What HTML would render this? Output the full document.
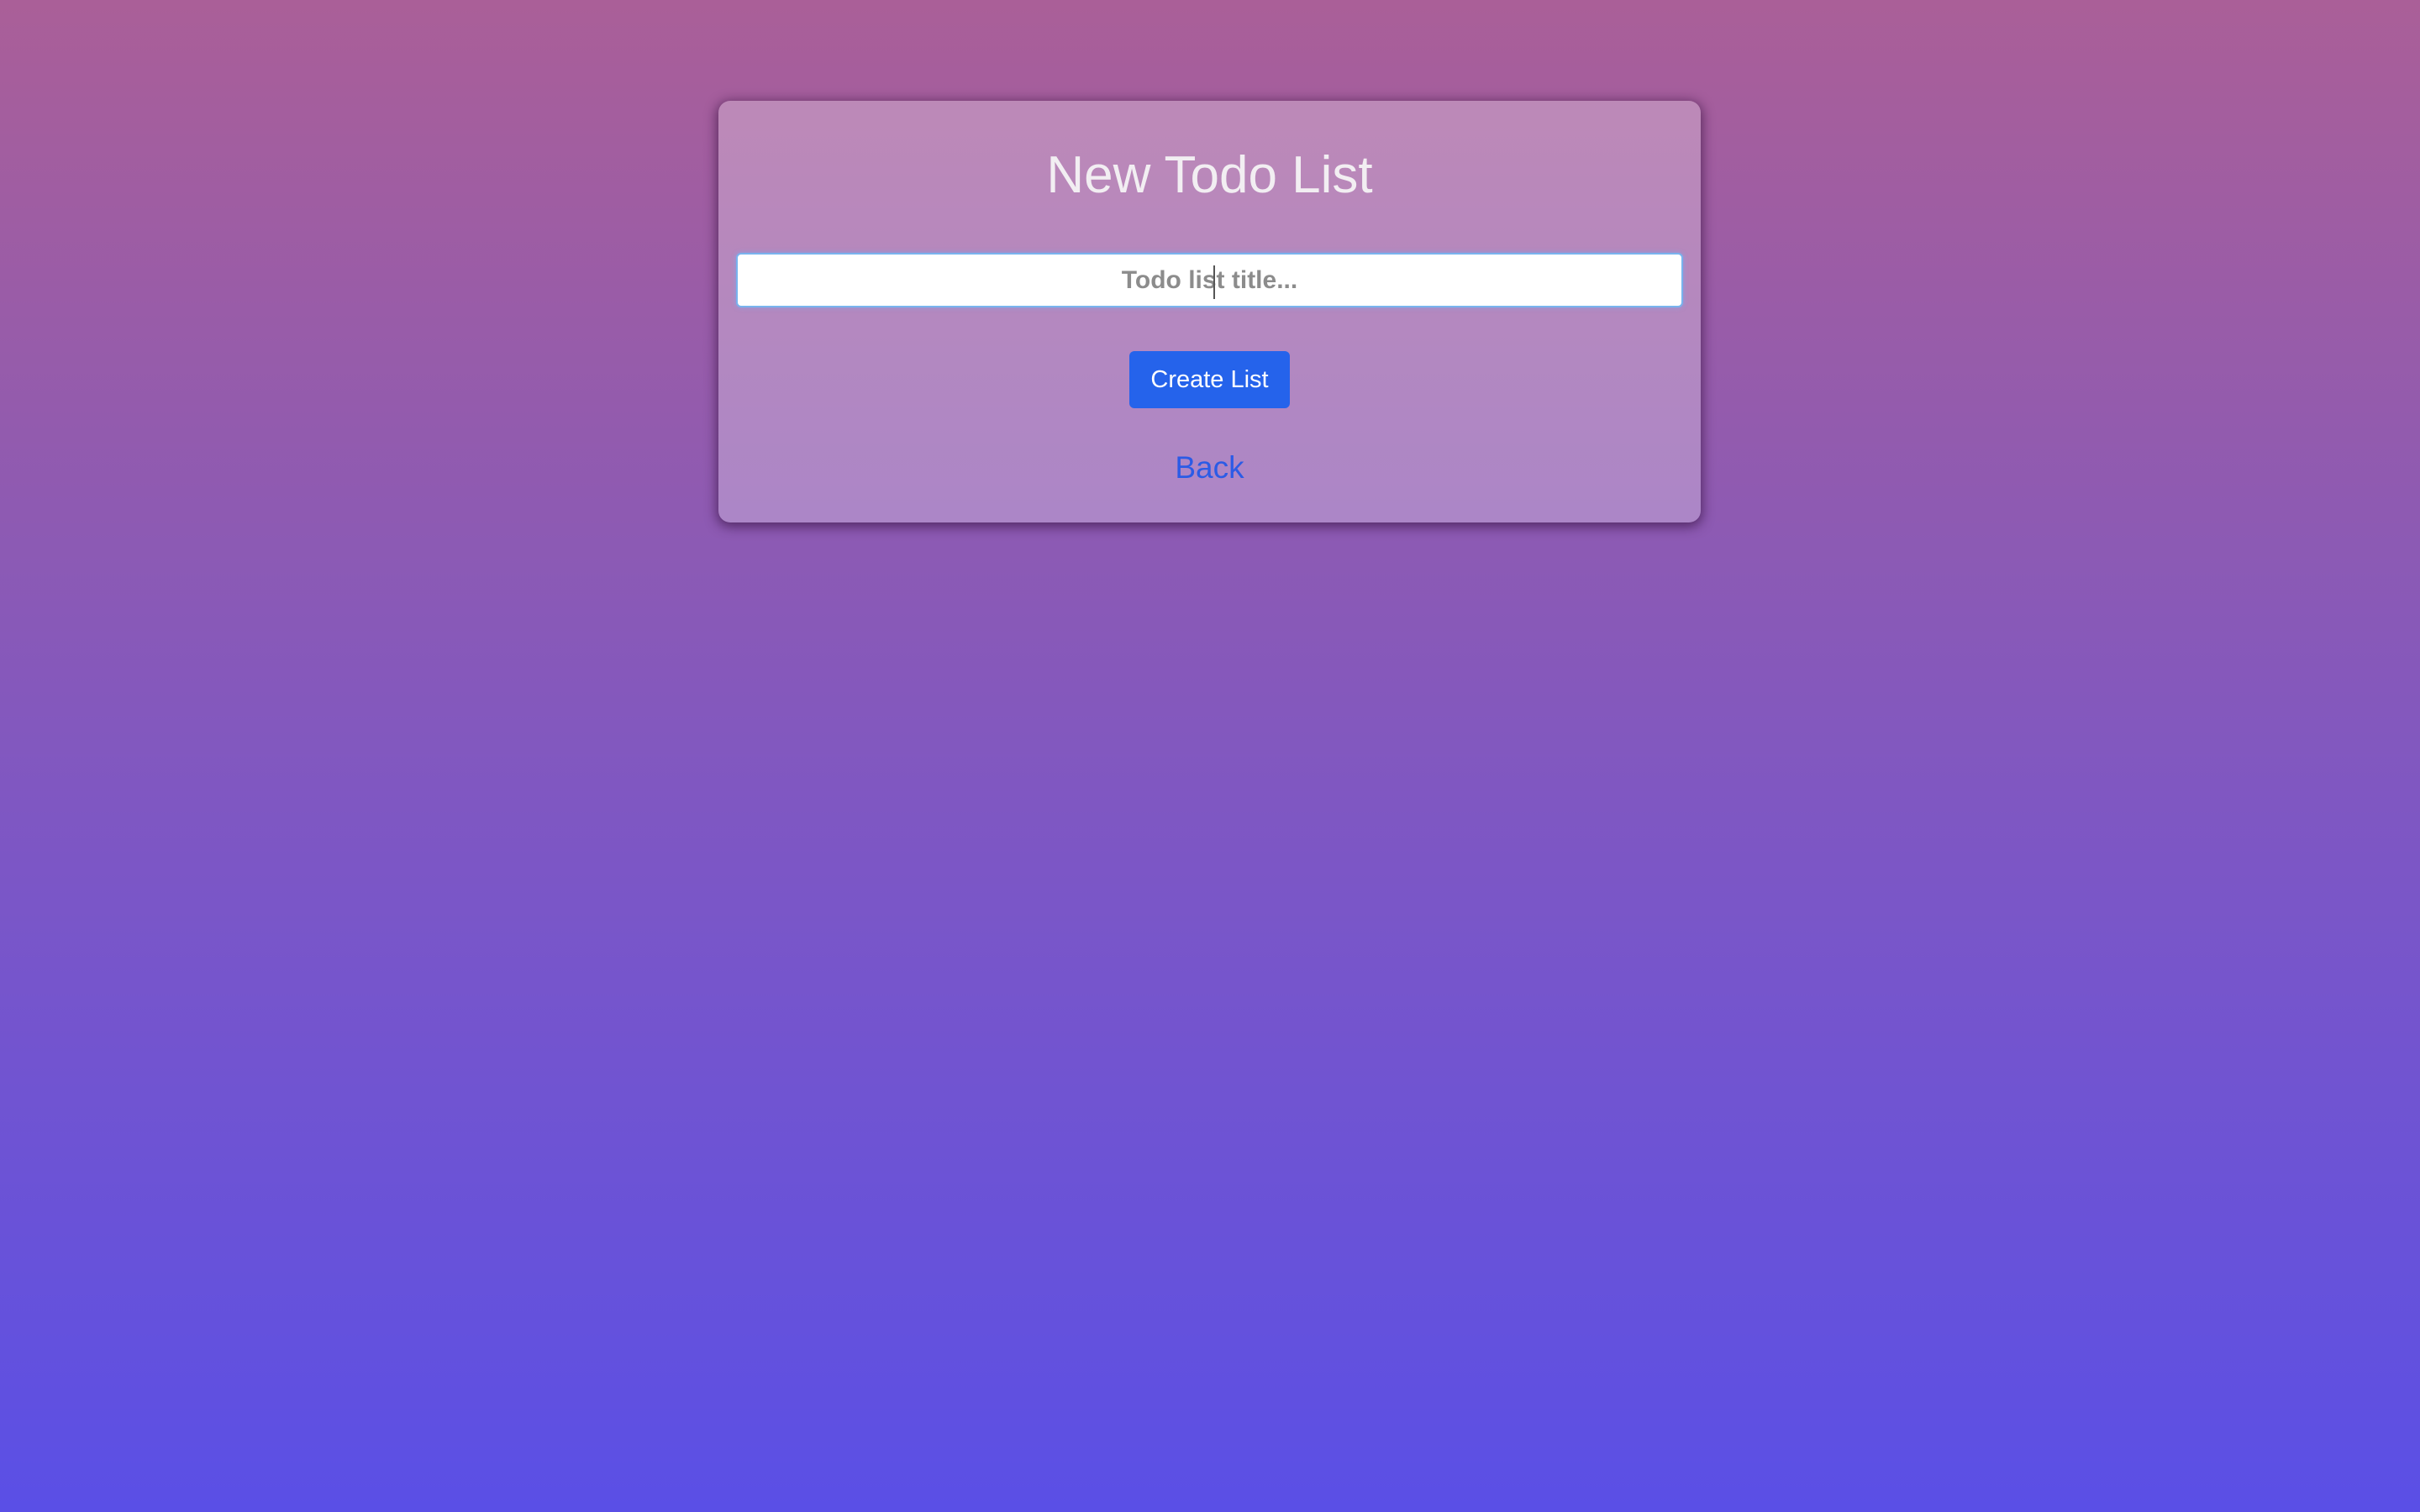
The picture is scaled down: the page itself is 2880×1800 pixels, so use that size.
<!DOCTYPE html>
<html><head><meta charset="utf-8"><style>
html,body{margin:0;padding:0;width:2880px;height:1800px;overflow:hidden}
body{background:linear-gradient(180deg,#aa5f98 0%,#8d5ab3 35%,#7655cc 65%,#5a4fe6 100%);font-family:"Liberation Sans",sans-serif;position:relative}
.card{position:absolute;left:855px;top:120px;width:1169px;height:502px;border-radius:14px;background:rgba(255,255,255,0.27);box-shadow:0 3px 14px 2px rgba(50,15,60,0.65)}
h1{position:absolute;left:0;right:0;margin:0;text-align:center;font-size:62px;font-weight:400;color:#f2eef2;line-height:80px;top:49px}
.inp{position:absolute;left:21px;top:181px;width:1123px;height:61px;background:#fff;border:2px solid #79b3ee;border-radius:6px;box-shadow:0 0 6px rgba(120,170,240,0.7);text-align:center;line-height:61px;font-size:30px;font-weight:700;color:#8c8c8c}
.caret{position:absolute;left:1444px;top:316px;width:2px;height:40px;background:#555}
.btn{position:absolute;left:489px;top:298px;width:191px;height:68px;background:#2563eb;border-radius:6px;color:#fff;font-size:29px;text-align:center;line-height:68px}
.back{position:absolute;left:0;right:0;top:412px;text-align:center;font-size:37px;color:#2b5be6;line-height:50px}
</style></head><body>
<div class="card">
<h1>New Todo List</h1>
<div class="inp">Todo list title...</div>
<div class="btn">Create List</div>
<div class="back">Back</div>
</div>
<div class="caret"></div>
</body></html>
